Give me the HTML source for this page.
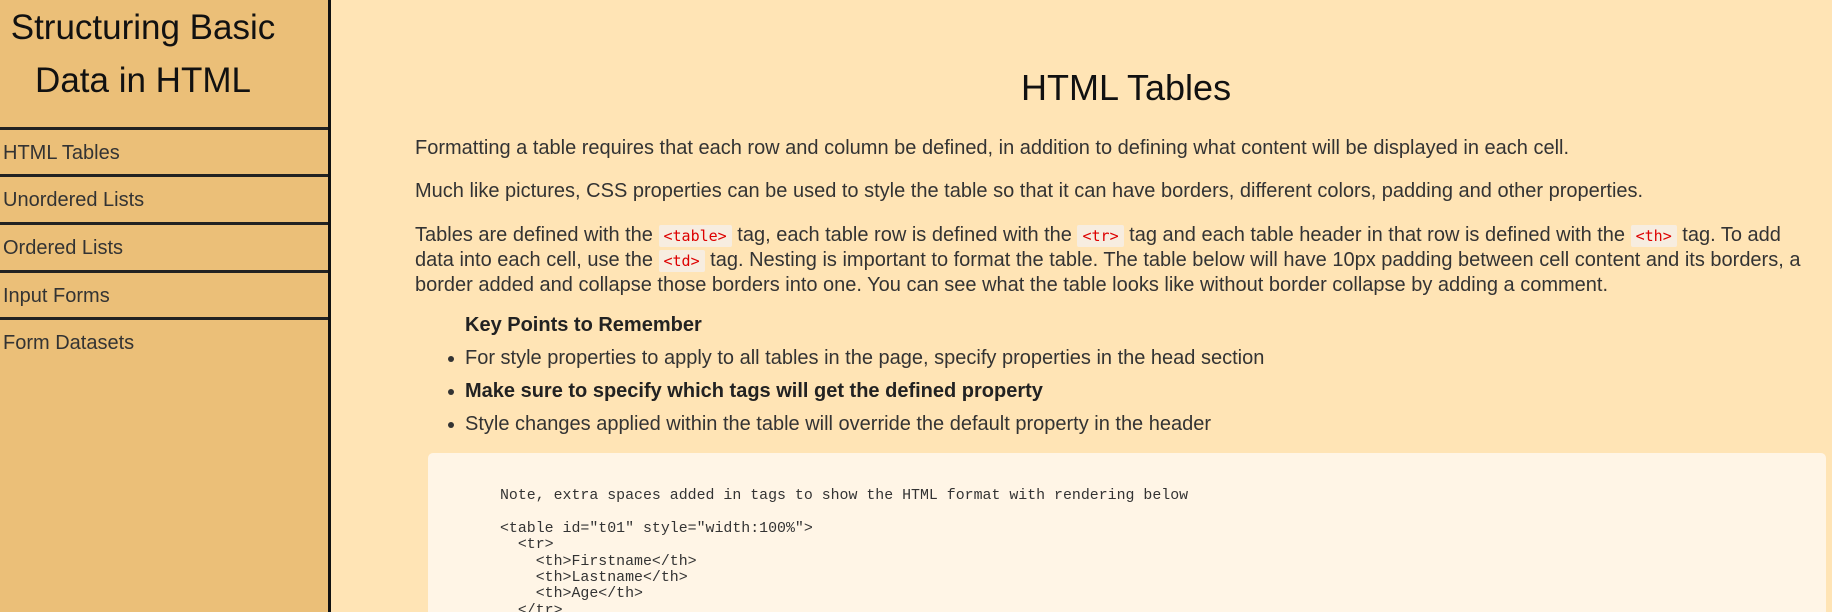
<!DOCTYPE html>
<html><head><style>
html,body{margin:0;width:1832px;height:612px;overflow:hidden}
body{background:#ffe4b5;font-family:"Liberation Sans",sans-serif;color:#333}
#w{position:relative;width:1832px;height:612px;overflow:hidden}
.side{position:absolute;left:0;top:0;width:328px;height:612px;background:#ebbf78;border-right:3px solid #111}
.t{position:absolute;left:0;width:292px;text-align:center;font-size:35px;color:#111;white-space:nowrap}
.nav{position:absolute;left:0;width:328px;border-top:3px solid #222;height:45px}
.nav span{position:absolute;left:3px;top:12px;font-size:20px;color:#333}
.a{position:absolute;white-space:nowrap;font-size:20px;line-height:24px}
code{font-family:"DejaVu Sans Mono","Liberation Mono",monospace;font-size:15px;color:#d00;background:#f7ede0;padding:2px 5px;border-radius:2px}
.box{position:absolute;left:428px;top:453px;width:1398px;height:159px;background:#fff5e6;border-radius:5px 5px 0 0}
pre{position:absolute;left:500px;top:488px;margin:0;font-family:"Liberation Mono",monospace;font-size:14.9px;line-height:16.4px;color:#333}
b{color:#222}
.dot{position:absolute;left:448px;width:6px;height:6px;border-radius:3px;background:#333}
</style></head><body><div id="w">
<div class="side">
<div class="t" style="top:8px;left:-2px;width:290px">Structuring Basic</div>
<div class="t" style="top:61px;left:-3px">Data in HTML</div>
<div class="nav" style="top:127px"><span>HTML Tables</span></div>
<div class="nav" style="top:174px"><span>Unordered Lists</span></div>
<div class="nav" style="top:222px"><span>Ordered Lists</span></div>
<div class="nav" style="top:270px"><span>Input Forms</span></div>
<div class="nav" style="top:317px;height:300px"><span>Form Datasets</span></div>
</div>
<div class="a" style="left:1021px;top:68px;font-size:36px;line-height:40px;color:#111">HTML Tables</div>
<div class="a" style="left:415px;top:136px">Formatting a table requires that each row and column be defined, in addition to defining what content will be displayed in each cell.</div>
<div class="a" style="left:415px;top:179px">Much like pictures, CSS properties can be used to style the table so that it can have borders, different colors, padding and other properties.</div>
<div class="a" style="left:415px;top:223px">Tables are defined with the <code>&lt;table&gt;</code> tag, each table row is defined with the <code>&lt;tr&gt;</code> tag and each table header in that row is defined with the <code>&lt;th&gt;</code> tag. To add<br>data into each cell, use the <code>&lt;td&gt;</code> tag. Nesting is important to format the table. The table below will have 10px padding between cell content and its borders, a<br>border added and collapse those borders into one. You can see what the table looks like without border collapse by adding a comment.</div>
<div class="a" style="left:465px;top:313px"><b>Key Points to Remember</b></div>
<div class="dot" style="top:356px"></div>
<div class="a" style="left:465px;top:346px">For style properties to apply to all tables in the page, specify properties in the head section</div>
<div class="dot" style="top:389px"></div>
<div class="a" style="left:465px;top:379px"><b>Make sure to specify which tags will get the defined property</b></div>
<div class="dot" style="top:422px"></div>
<div class="a" style="left:465px;top:412px">Style changes applied within the table will override the default property in the header</div>
<div class="box"></div>
<pre>Note, extra spaces added in tags to show the HTML format with rendering below

&lt;table id="t01" style="width:100%"&gt;
  &lt;tr&gt;
    &lt;th&gt;Firstname&lt;/th&gt;
    &lt;th&gt;Lastname&lt;/th&gt;
    &lt;th&gt;Age&lt;/th&gt;
  &lt;/tr&gt;</pre>
</div></body></html>
